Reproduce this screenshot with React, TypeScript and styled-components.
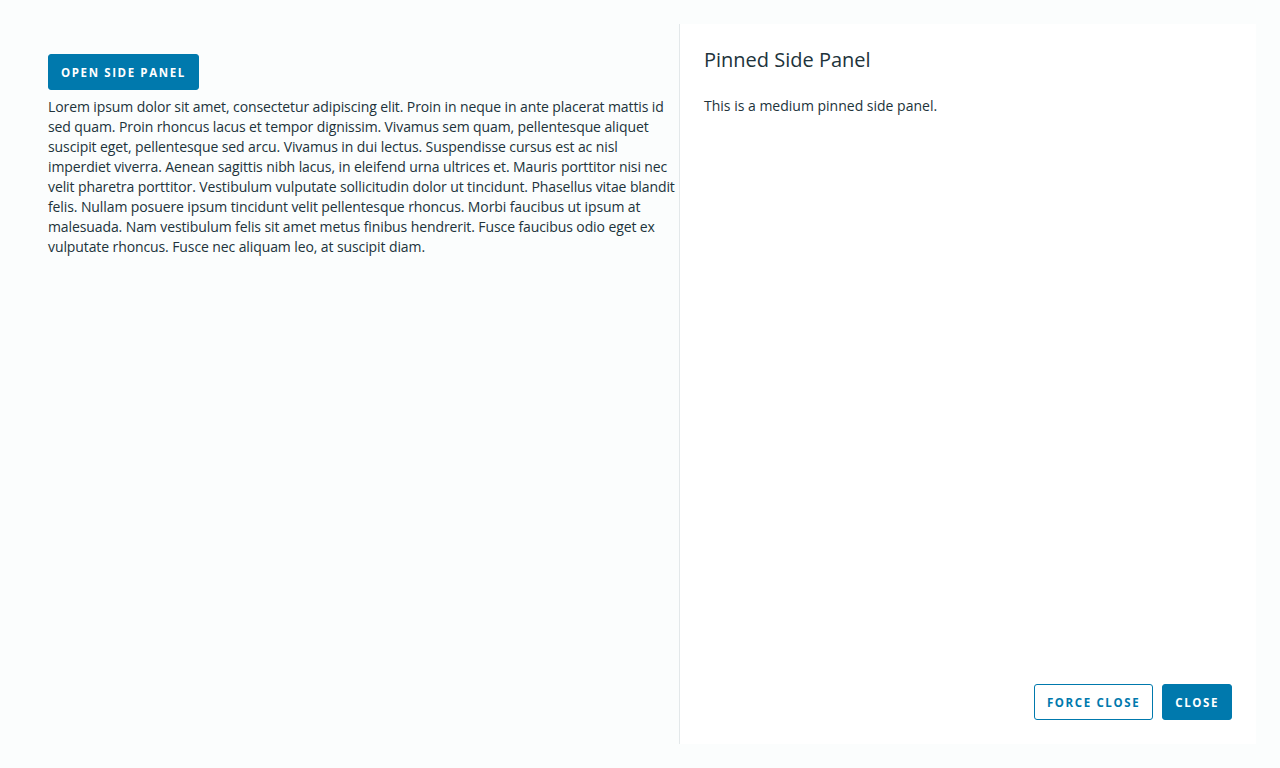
import React from "react";
import styled, { createGlobalStyle } from "styled-components";

const Global = createGlobalStyle`
  html, body { margin: 0; padding: 0; }
  body {
    background: #fbfdfd;
    font-family: "Open Sans", "Noto Sans", sans-serif;
    color: #21333b;
    -webkit-font-smoothing: antialiased;
  }
  * { box-sizing: border-box; }
`;

const Page = styled.div`
  height: 768px;
  padding: 24px;
  display: flex;
`;

const Main = styled.main`
  flex: 1;
  min-width: 0;
  padding: 30px 0 0 24px;
  display: flex;
  flex-direction: column;
  align-items: flex-start;
  gap: 7px;
`;

const Button = styled.button<{ $outline?: boolean }>`
  height: 36px;
  padding: 0 12px;
  border-radius: 3px;
  border: 1px solid #0079ad;
  background: ${(p) => (p.$outline ? "#ffffff" : "#0079ad")};
  color: ${(p) => (p.$outline ? "#0079ad" : "#ffffff")};
  font-family: "Open Sans", sans-serif;
  font-size: 11.5px;
  font-weight: 700;
  letter-spacing: 0.14em;
  text-transform: uppercase;
  cursor: pointer;
`;

const Lorem = styled.p`
  margin: 0;
  font-size: 14px;
  line-height: 20px;
  letter-spacing: -0.1px;
  color: #21333b;
`;

const Line = styled.span`
  display: block;
  white-space: nowrap;
`;

const Panel = styled.aside`
  width: 577px;
  background: #ffffff;
  border-left: 1px solid #e3e8ea;
  padding: 24px;
  display: flex;
  flex-direction: column;
`;

const Title = styled.h3`
  margin: 0;
  font-size: 20px;
  font-weight: 400;
  line-height: 24px;
  color: #21333b;
`;

const Body = styled.p`
  margin: 24px 0 0;
  font-size: 14px;
  line-height: 20px;
  flex: 1;
`;

const Footer = styled.div`
  display: flex;
  justify-content: flex-end;
  gap: 9px;
`;

const loremLines = [
  "Lorem ipsum dolor sit amet, consectetur adipiscing elit. Proin in neque in ante placerat mattis id",
  "sed quam. Proin rhoncus lacus et tempor dignissim. Vivamus sem quam, pellentesque aliquet",
  "suscipit eget, pellentesque sed arcu. Vivamus in dui lectus. Suspendisse cursus est ac nisl",
  "imperdiet viverra. Aenean sagittis nibh lacus, in eleifend urna ultrices et. Mauris porttitor nisi nec",
  "velit pharetra porttitor. Vestibulum vulputate sollicitudin dolor ut tincidunt. Phasellus vitae blandit",
  "felis. Nullam posuere ipsum tincidunt velit pellentesque rhoncus. Morbi faucibus ut ipsum at",
  "malesuada. Nam vestibulum felis sit amet metus finibus hendrerit. Fusce faucibus odio eget ex",
  "vulputate rhoncus. Fusce nec aliquam leo, at suscipit diam.",
];

export default function App() {
  return (
    <>
      <Global />
      <Page>
        <Main>
          <Button>Open side panel</Button>
          <Lorem>
            {loremLines.map((l, i) => (
              <Line key={i}>{l + (i < loremLines.length - 1 ? " " : "")}</Line>
            ))}
          </Lorem>
        </Main>
        <Panel>
          <Title>Pinned Side Panel</Title>
          <Body>This is a medium pinned side panel.</Body>
          <Footer>
            <Button $outline>Force close</Button>
            <Button>Close</Button>
          </Footer>
        </Panel>
      </Page>
    </>
  );
}
